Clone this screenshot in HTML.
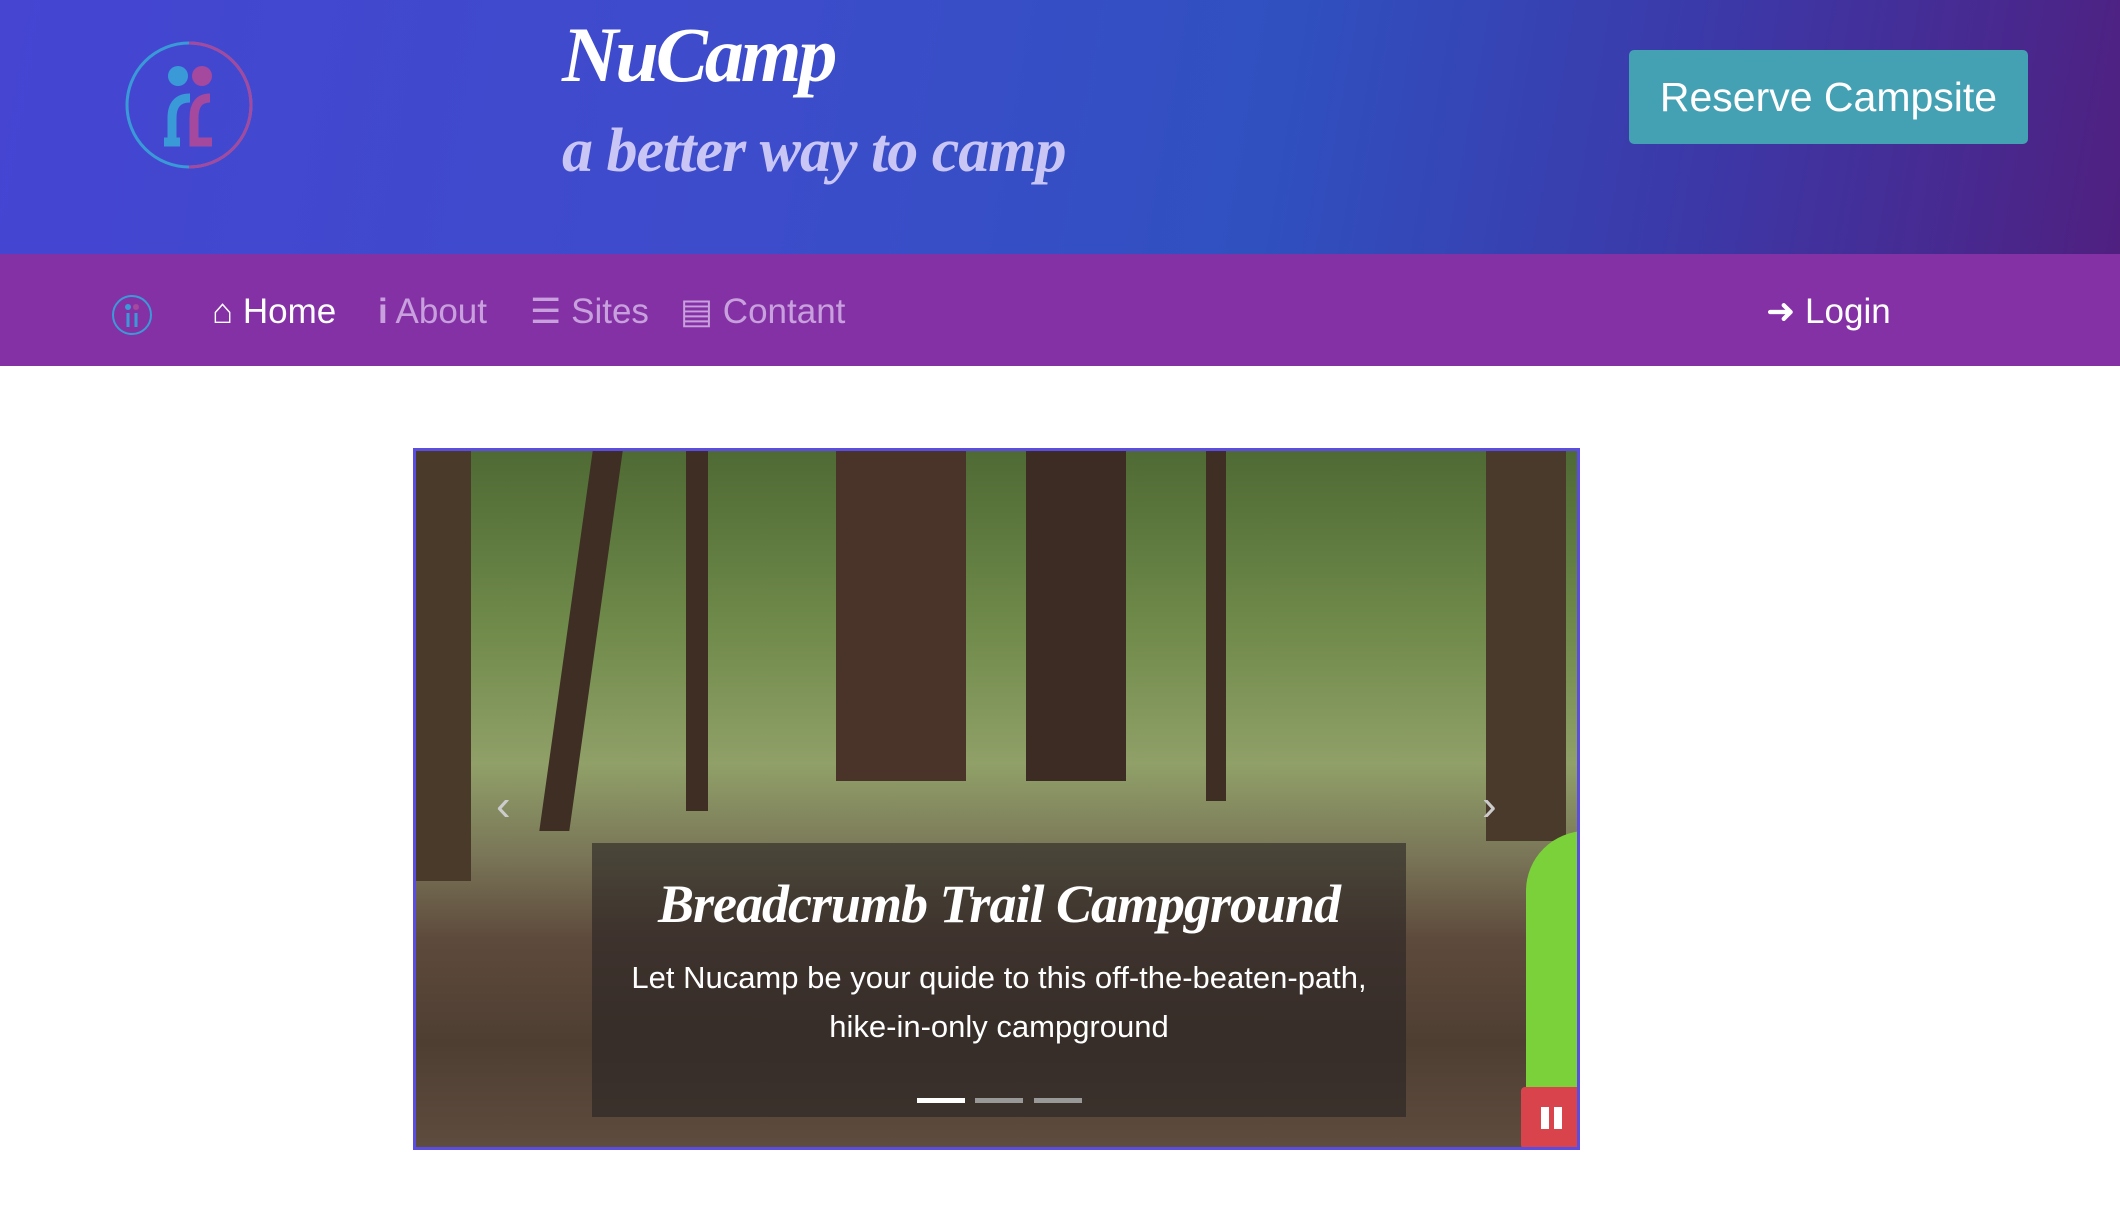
<!DOCTYPE html>
<html><head><style>
*{margin:0;padding:0;box-sizing:border-box}
body{width:2120px;height:1218px;background:#fff;font-family:"Liberation Sans",sans-serif;position:relative;overflow:hidden}
.hdr{position:absolute;left:0;top:0;width:2120px;height:254px;background:linear-gradient(100deg,#4545d2 0%,#3d4ccb 35%,#3050c0 60%,#3c38a8 80%,#4f2080 100%)}
.nav{position:absolute;left:0;top:254px;width:2120px;height:112px;background:#8531a6}
.t1{position:absolute;left:562px;top:10px;font:italic bold 78px "Liberation Serif",serif;color:#fff;letter-spacing:-3px}
.t2{position:absolute;left:562px;top:116px;font:italic bold 62px "Liberation Serif",serif;color:#c9c6f5;letter-spacing:-1px}
.btn{position:absolute;left:1629px;top:50px;width:399px;height:94px;background:#44a1b4;border-radius:5px;color:#fff;font-size:41px;line-height:94px;text-align:center}
.ni{position:absolute;top:292px;font-size:35px;color:#c8a0dd;white-space:nowrap}
.car{position:absolute;left:413px;top:448px;width:1167px;height:702px;border:3px solid #5b4de0;overflow:hidden;
background:linear-gradient(180deg,#4f6a34 0%,#6f8a4a 25%,#90a068 45%,#7a7658 58%,#5e4a3c 70%,#4e3e32 85%,#5e4c3e 100%)}
.tr{position:absolute;top:0;background:#3e2e24}
.cap{position:absolute;left:176px;top:392px;width:814px;height:274px;background:rgba(40,35,35,.6);text-align:center;color:#fff}
.ind{position:absolute;top:647px;height:5px;width:48px;background:#999}
</style></head><body>
<div class="hdr"></div>
<svg style="position:absolute;left:122px;top:38px" width="134" height="134" viewBox="0 0 134 134">
<circle cx="67" cy="67" r="62" fill="none" stroke="#3a9ad8" stroke-width="3"/>
<path d="M67 5 A62 62 0 0 1 67 129" fill="none" stroke="#a4499e" stroke-width="3"/>
<circle cx="56" cy="38" r="10" fill="#3a9ad8"/><circle cx="80" cy="38" r="10" fill="#a4499e"/>
<path d="M88 60 Q72 60 72 80 L72 104 L90 104" fill="none" stroke="#a4499e" stroke-width="9"/>
<path d="M68 60 Q50 60 50 80 L50 104 M58 104 L42 104" fill="none" stroke="#3a9ad8" stroke-width="9"/>
</svg>
<div class="t1">NuCamp</div>
<div class="t2">a better way to camp</div>
<div class="btn">Reserve Campsite</div>
<div class="nav"></div>
<svg style="position:absolute;left:111px;top:294px" width="42" height="42" viewBox="0 0 42 42"><circle cx="21" cy="21" r="19" fill="none" stroke="#3a9ad8" stroke-width="2"/><circle cx="17" cy="13" r="3" fill="#3a9ad8"/><circle cx="25" cy="13" r="3" fill="#a4499e"/><path d="M17 19v14M25 19v14" stroke="#3a9ad8" stroke-width="3"/></svg>
<div class="ni" style="left:212px;color:#fff">&#8962; Home</div>
<div class="ni" style="left:378px"><b>i</b> About</div>
<div class="ni" style="left:530px">&#9776; Sites</div>
<div class="ni" style="left:680px">&#9636; Contant</div>
<div class="ni" style="left:1766px;color:#fff">&#10140; Login</div>
<div class="car">
<div class="tr" style="left:0;width:55px;height:430px;background:#4a3a2a"></div>
<div class="tr" style="left:150px;width:30px;height:380px;transform:skewX(-8deg)"></div>
<div class="tr" style="left:270px;width:22px;height:360px"></div>
<div class="tr" style="left:420px;width:130px;height:330px;background:#4a342a"></div>
<div class="tr" style="left:610px;width:100px;height:330px;background:#3c2c24"></div>
<div class="tr" style="left:790px;width:20px;height:350px"></div>
<div class="tr" style="left:1070px;width:80px;height:390px;background:#4a3a2c"></div>
<div style="position:absolute;left:1110px;top:380px;width:120px;height:340px;background:#7ad13a;border-radius:60px 0 0 0"></div>
<div style="position:absolute;left:80px;top:330px;font-size:44px;color:#ccc">&#8249;</div>
<div style="position:absolute;left:1066px;top:330px;font-size:44px;color:#ccc">&#8250;</div>
<div class="cap">
<div style="margin-top:30px;font:italic bold 54px 'Liberation Serif',serif;letter-spacing:-1px">Breadcrumb Trail Campground</div>
<div style="margin-top:18px;font-size:31px;line-height:49px">Let Nucamp be your quide to this off-the-beaten-path,<br>hike-in-only campground</div>
</div>
<div class="ind" style="left:501px;background:#fff"></div>
<div class="ind" style="left:559px"></div>
<div class="ind" style="left:618px"></div>
<div style="position:absolute;left:1105px;top:636px;width:60px;height:62px;background:#d9434b;border-radius:4px">
<div style="position:absolute;left:20px;top:20px;width:8px;height:22px;background:#fff"></div>
<div style="position:absolute;left:33px;top:20px;width:8px;height:22px;background:#fff"></div></div>
</div>
</body></html>
